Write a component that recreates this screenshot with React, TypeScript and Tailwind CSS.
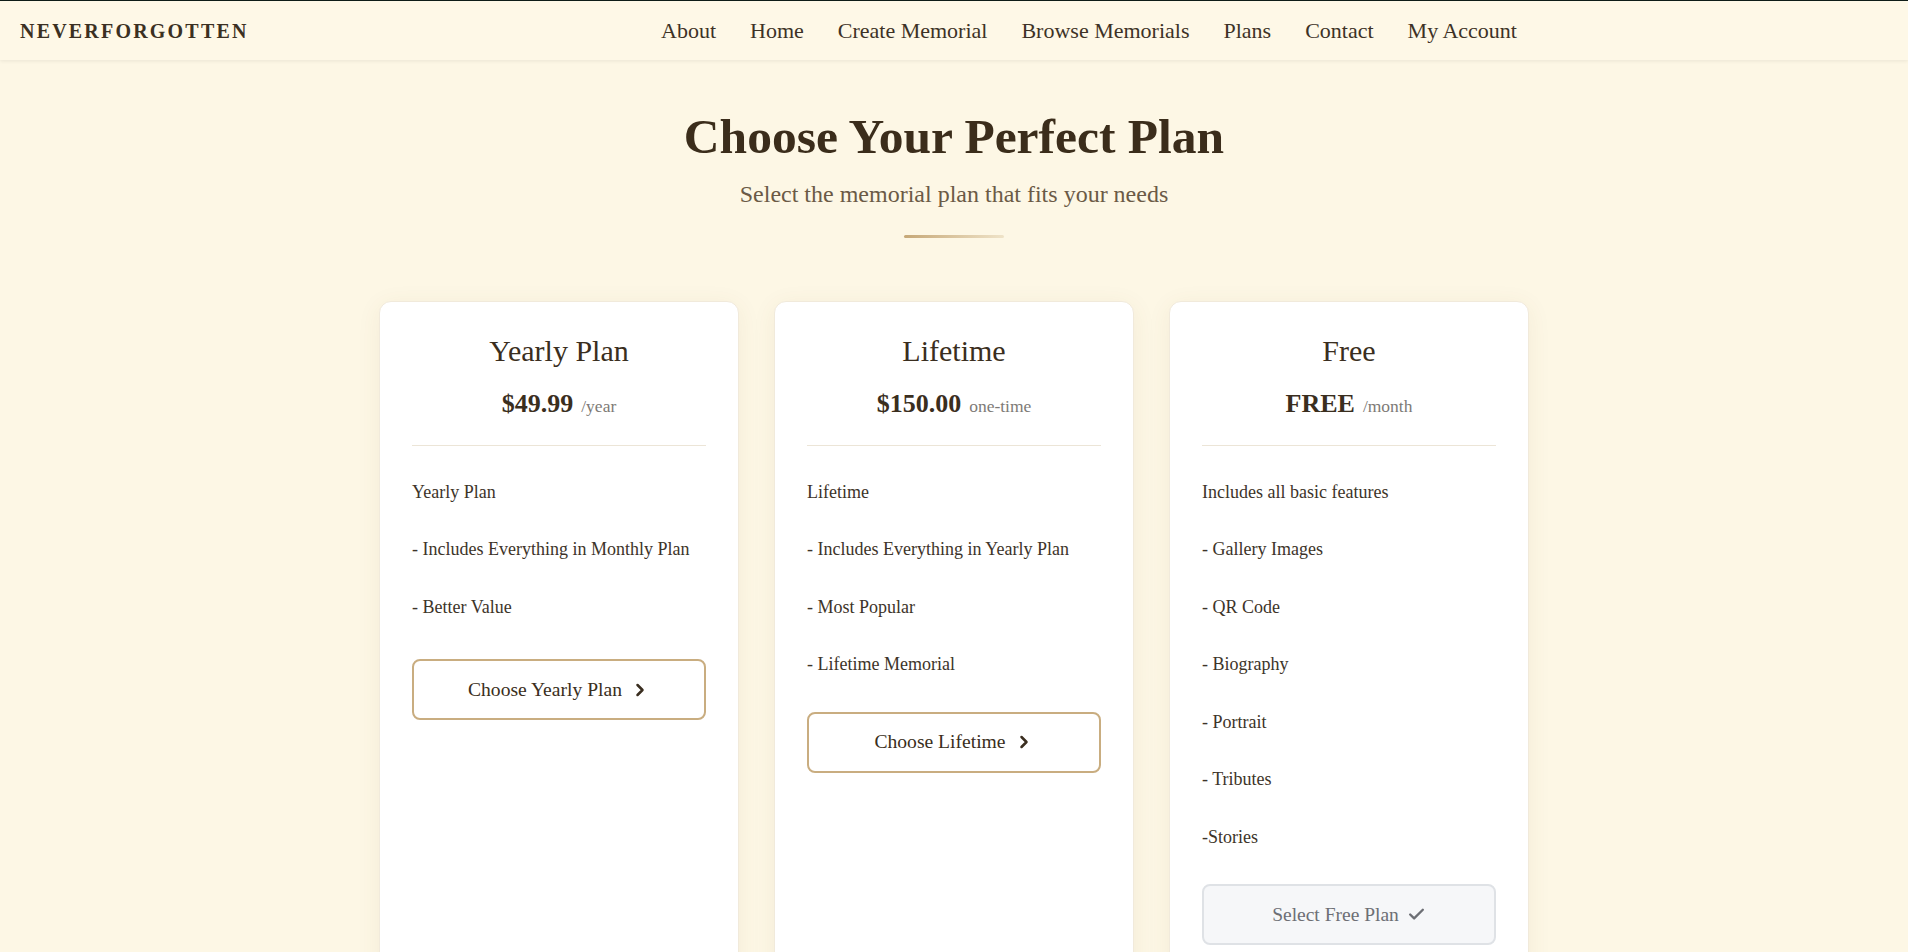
import { ChevronRight, Check } from 'lucide-react';

const navItems = ['About', 'Home', 'Create Memorial', 'Browse Memorials', 'Plans', 'Contact', 'My Account'];

type Plan = {
  name: string;
  price: string;
  period: string;
  features: string[];
  cta: string;
  free?: boolean;
  btnGap: string;
};

const plans: Plan[] = [
  {
    name: 'Yearly Plan',
    price: '$49.99',
    period: '/year',
    features: ['Yearly Plan', '- Includes Everything in Monthly Plan', '- Better Value'],
    cta: 'Choose Yearly Plan',
    btnGap: 'mt-[39px]',
  },
  {
    name: 'Lifetime',
    price: '$150.00',
    period: 'one-time',
    features: ['Lifetime', '- Includes Everything in Yearly Plan', '- Most Popular', '- Lifetime Memorial'],
    cta: 'Choose Lifetime',
    btnGap: 'mt-[34px]',
  },
  {
    name: 'Free',
    price: 'FREE',
    period: '/month',
    features: [
      'Includes all basic features',
      '- Gallery Images',
      '- QR Code',
      '- Biography',
      '- Portrait',
      '- Tributes',
      '-Stories',
    ],
    cta: 'Select Free Plan',
    free: true,
    btnGap: 'mt-[34px]',
  },
];

const PlanCard = ({ plan }: { plan: Plan }) => (
  <div className="bg-white border border-[#f1eadb] rounded-xl shadow-[0_4px_24px_rgba(120,90,40,0.07)] px-8 pt-[29px] pb-8 flex flex-col">
    <h3 className="text-center text-[30px] leading-[39px] text-[#3a2e20]">{plan.name}</h3>
    <div className="mt-[15.5px] flex items-baseline justify-center gap-2 leading-[36px]">
      <span className="text-[26px] font-bold text-[#3a2e1e]">{plan.price}</span>
      <span className="text-[17.5px] text-[#7d7a76]">{plan.period}</span>
    </div>
    <div className="mt-[21px] h-px bg-[#ece5d7]" />
    <div className="mt-[34px] flex flex-col gap-[32px]">
      {plan.features.map((f) => (
        <p key={f} className="text-[18px] leading-[25.5px] text-[#3d3429]">
          {f}
        </p>
      ))}
    </div>
    {plan.free ? (
      <button className={`${plan.btnGap} h-[61px] w-full rounded-lg border-2 border-[#dfe2e6] bg-[#f6f7f9] text-[19.5px] text-[#6d6f75] flex items-center justify-center gap-2`}>
        {plan.cta}
        <Check className="w-[19px] h-[19px]" strokeWidth={3} />
      </button>
    ) : (
      <button className={`${plan.btnGap} h-[61px] w-full rounded-lg border-2 border-[#c9ad80] bg-white text-[19.6px] text-[#3a2e20] flex items-center justify-center gap-2`}>
        {plan.cta}
        <ChevronRight className="w-[20px] h-[20px]" strokeWidth={3} />
      </button>
    )}
  </div>
);

export default function App() {
  return (
    <div className="h-screen overflow-hidden bg-[#fdf7e5] font-['Liberation_Serif',serif] text-[#3a2e1e]">
      <header className="h-[60px] border-t border-[#0e1c17] bg-[#fef8e7] shadow-[0_1px_4px_rgba(0,0,0,0.08)] flex items-center px-5">
        <div className="w-[641px] shrink-0">
          <span className="text-[20px] font-bold tracking-[2.2px] text-[#3b3022]">NEVERFORGOTTEN</span>
        </div>
        <nav className="flex items-center gap-[34px]">
          {navItems.map((item) => (
            <a key={item} href="#" className="text-[22px] text-[#3d3226]">
              {item}
            </a>
          ))}
        </nav>
      </header>

      <main className="flex flex-col items-center">
        <h1 className="mt-[48px] text-[49.5px] leading-[58px] font-bold text-[#3b2d1b]">Choose Your Perfect Plan</h1>
        <p className="mt-[12px] text-[24px] leading-[33px] text-[#6b5a46]">Select the memorial plan that fits your needs</p>
        <div className="mt-[24px] h-[3px] w-[100px] rounded-full bg-gradient-to-r from-[#c6a877] to-[#efe3c8]" />

        <div className="mt-[63px] w-[1150px] grid grid-cols-3 gap-[35px]">
          {plans.map((p) => (
            <PlanCard key={p.name} plan={p} />
          ))}
        </div>
      </main>
    </div>
  );
}
